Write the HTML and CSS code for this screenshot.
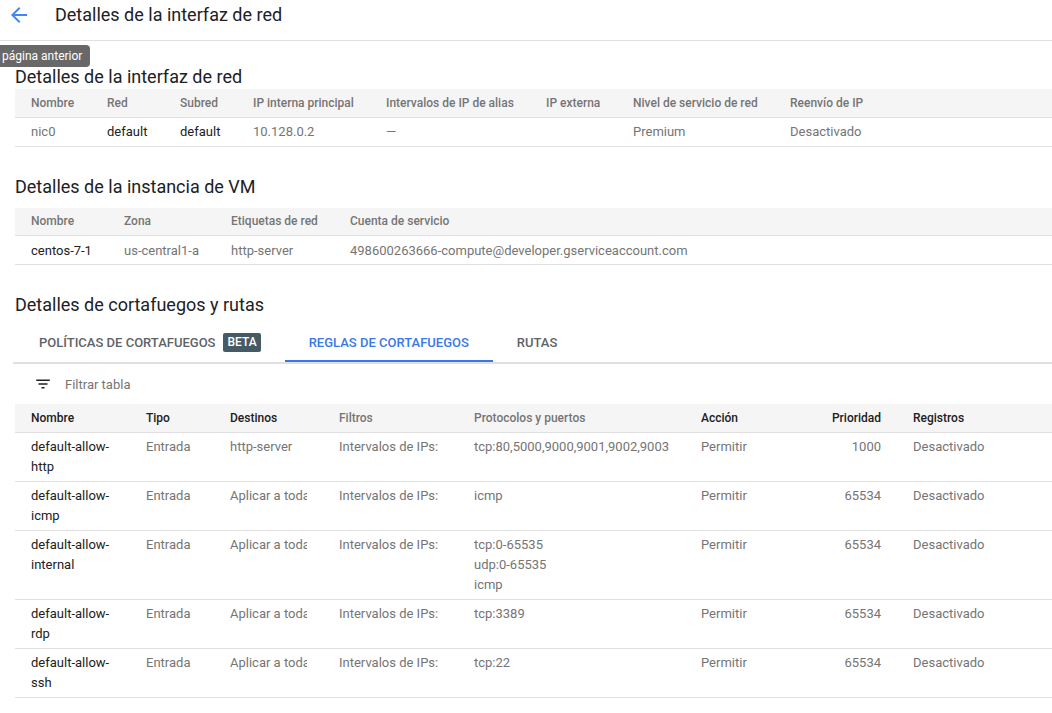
FILE: index.html
```html
<!DOCTYPE html>
<html lang="es">
<head>
<meta charset="utf-8">
<title>Detalles de la interfaz de red</title>
<link rel="stylesheet" href="styles.css">
</head>
<body>
<header class="topbar">
  <button class="back" aria-label="página anterior">
    <svg width="24" height="24" viewBox="0 0 24 24"><path d="M20 11H7.83l5.59-5.59L12 4l-8 8 8 8 1.41-1.41L7.83 13H20v-2z" fill="#4285f4"/></svg>
  </button>
  <h1 class="title">Detalles de la interfaz de red</h1>
</header>
<div class="tooltip">página anterior</div>

<main class="content">
  <section class="sec sec-nic">
    <h2 class="heading">Detalles de la interfaz de red</h2>
    <table class="tbl">
      <colgroup><col style="width:76px"><col style="width:73px"><col style="width:73px"><col style="width:133px"><col style="width:160px"><col style="width:87px"><col style="width:157px"><col></colgroup>
      <thead><tr><th>Nombre</th><th>Red</th><th>Subred</th><th>IP interna principal</th><th>Intervalos de IP de alias</th><th>IP externa</th><th>Nivel de servicio de red</th><th>Reenvío de IP</th></tr></thead>
      <tbody><tr><td>nic0</td><td class="dark">default</td><td class="dark">default</td><td>10.128.0.2</td><td>—</td><td></td><td>Premium</td><td>Desactivado</td></tr></tbody>
    </table>
  </section>

  <section class="sec sec-vm">
    <h2 class="heading">Detalles de la instancia de VM</h2>
    <table class="tbl">
      <colgroup><col style="width:93px"><col style="width:107px"><col style="width:119px"><col></colgroup>
      <thead><tr><th>Nombre</th><th>Zona</th><th>Etiquetas de red</th><th>Cuenta de servicio</th></tr></thead>
      <tbody><tr><td class="dark">centos-7-1</td><td>us-central1-a</td><td>http-server</td><td>498600263666-compute@developer.gserviceaccount.com</td></tr></tbody>
    </table>
  </section>

  <section class="sec sec-fw">
    <h2 class="heading">Detalles de cortafuegos y rutas</h2>
    <nav class="tabs">
      <div class="tab">POLÍTICAS DE CORTAFUEGOS <span class="badge">BETA</span></div>
      <div class="tab active">REGLAS DE CORTAFUEGOS</div>
      <div class="tab">RUTAS</div>
    </nav>
    <div class="filter">
      <svg class="filter-icon" width="18" height="18" viewBox="0 0 24 24"><path d="M10 18h4v-2h-4v2zM3 6v2h18V6H3zm3 7h12v-2H6v2z" fill="#212121"/></svg>
      <span class="filter-text">Filtrar tabla</span>
    </div>
    <table class="tbl rules">
      <colgroup><col style="width:115px"><col style="width:84px"><col style="width:109px"><col style="width:135px"><col style="width:227px"><col style="width:85px"><col style="width:127px"><col></colgroup>
      <thead><tr><th class="dark">Nombre</th><th class="dark">Tipo</th><th class="dark">Destinos</th><th>Filtros</th><th>Protocolos y puertos</th><th class="dark">Acción</th><th class="dark num">Prioridad</th><th class="dark">Registros</th></tr></thead>
      <tbody>
        <tr><td class="dark">default-allow-http</td><td>Entrada</td><td><div class="clip">http-server</div></td><td><div class="clip">Intervalos de IPs:</div></td><td>tcp:80,5000,9000,9001,9002,9003</td><td>Permitir</td><td class="num">1000</td><td>Desactivado</td></tr>
        <tr><td class="dark">default-allow-icmp</td><td>Entrada</td><td><div class="clip">Aplicar a todas</div></td><td><div class="clip">Intervalos de IPs:</div></td><td>icmp</td><td>Permitir</td><td class="num">65534</td><td>Desactivado</td></tr>
        <tr><td class="dark">default-allow-internal</td><td>Entrada</td><td><div class="clip">Aplicar a todas</div></td><td><div class="clip">Intervalos de IPs:</div></td><td>tcp:0-65535<br>udp:0-65535<br>icmp</td><td>Permitir</td><td class="num">65534</td><td>Desactivado</td></tr>
        <tr><td class="dark">default-allow-rdp</td><td>Entrada</td><td><div class="clip">Aplicar a todas</div></td><td><div class="clip">Intervalos de IPs:</div></td><td>tcp:3389</td><td>Permitir</td><td class="num">65534</td><td>Desactivado</td></tr>
        <tr><td class="dark">default-allow-ssh</td><td>Entrada</td><td><div class="clip">Aplicar a todas</div></td><td><div class="clip">Intervalos de IPs:</div></td><td>tcp:22</td><td>Permitir</td><td class="num">65534</td><td>Desactivado</td></tr>
      </tbody>
    </table>
  </section>
</main>
</body>
</html>
```

FILE: styles.css
```css
* { box-sizing: border-box; }
html, body { margin: 0; padding: 0; background: #fff; }
body {
  font-family: Roboto, "Liberation Sans", Arial, sans-serif;
  color: #212121;
  width: 1052px;
  height: 713px;
  overflow: hidden;
  position: relative;
}
.topbar {
  height: 41px;
  border-bottom: 1px solid #e0e0e0;
  display: flex;
  align-items: flex-start;
  padding-top: 3px;
}
.back {
  border: 0;
  background: none;
  padding: 0;
  margin: 0 0 0 7px;
  width: 24px;
  height: 24px;
  display: flex;
}
.title {
  margin: 0 0 0 24px;
  font-size: 18px;
  font-weight: 400;
  line-height: 24px;
  color: #202124;
}
.tooltip {
  position: absolute;
  left: 0;
  top: 45px;
  width: 90px;
  height: 22px;
  padding: 0 0 0 2px;
  background: #686868;
  color: #fff;
  font-size: 12px;
  line-height: 22px;
  border-radius: 0 4px 4px 0;
}
.content { padding-left: 15px; }
.heading {
  margin: 0;
  font-size: 18px;
  font-weight: 400;
  line-height: 24px;
  color: #202124;
}
.sec-nic { padding-top: 24px; }
.sec-nic .heading { margin-bottom: 0; }
.sec-vm { padding-top: 28px; }
.sec-vm .heading { margin-bottom: 9px; }
.sec-fw { padding-top: 28px; }
.sec-fw .heading { margin-bottom: 8px; }

.tbl {
  width: 100%;
  border-collapse: collapse;
  table-layout: fixed;
  font-size: 13px;
}
.tbl th {
  background: #f5f5f5;
  height: 28px;
  padding: 0 16px;
  text-align: left;
  font-size: 12px;
  font-weight: 500;
  color: #757575;
  border-bottom: 1px solid #e0e0e0;
  white-space: nowrap;
  vertical-align: middle;
}
.tbl td {
  height: 29px;
  padding: 0 16px;
  color: #757575;
  border-bottom: 1px solid #e0e0e0;
  white-space: nowrap;
  vertical-align: middle;
}
.tbl .dark { color: #212121; }
.tbl th.dark { color: #212121; }
.tbl .num { text-align: right; }

.tabs {
  display: flex;
  border-bottom: 2px solid #e0e0e0;
  margin-left: -2px;
  padding-left: 2px;
}
.tab {
  height: 37px;
  padding: 0 24px;
  display: flex;
  align-items: center;
  gap: 8px;
  font-size: 13px;
  font-weight: 500;
  color: #5f6368;
  border-bottom: 2px solid transparent;
}
.tab.active {
  color: #3b78e7;
  border-bottom-color: #3b78e7;
}
.badge {
  background: #455a64;
  color: #fff;
  font-size: 12px;
  font-weight: 500;
  padding: 0 4px;
  line-height: 19px;
  border-radius: 2px;
}
.filter {
  height: 40px;
  display: flex;
  align-items: center;
  padding-left: 19px;
}
.filter-icon { margin-right: 13px; }
.filter-text { font-size: 13px; color: #757575; }

.rules td {
  height: auto;
  padding: 4px 16px;
  line-height: 20px;
  vertical-align: top;
  white-space: normal;
}
.rules .clip {
  white-space: nowrap;
  overflow: hidden;
}
.rules th { height: 28px; }
```
